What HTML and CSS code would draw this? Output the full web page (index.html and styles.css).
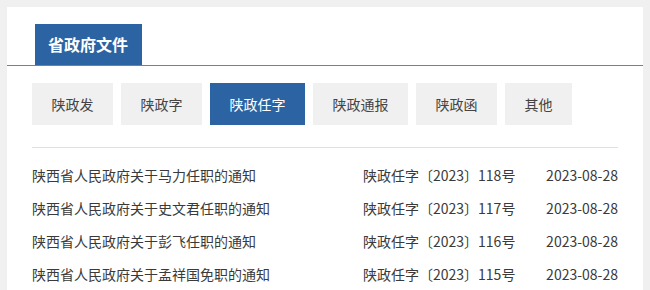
FILE: index.html
```html
<!DOCTYPE html>
<html lang="zh-CN">
<head>
    <meta charset="UTF-8">
    <title>省政府文件</title>
    <link rel="stylesheet" href="styles.css">
</head>
<body>
    <div class="card">
        <div class="card-head">
            <span class="card-title">省政府文件</span>
        </div>

        <div class="tabs">
            <span class="tab">陕政发</span>
            <span class="tab">陕政字</span>
            <span class="tab active">陕政任字</span>
            <span class="tab">陕政通报</span>
            <span class="tab">陕政函</span>
            <span class="tab">其他</span>
        </div>

        <ul class="doc-list">
            <li class="doc"><span class="doc-title">陕西省人民政府关于马力任职的通知</span><span class="doc-no">陕政任字〔2023〕118号</span><span class="doc-date">2023-08-28</span></li>
            <li class="doc"><span class="doc-title">陕西省人民政府关于史文君任职的通知</span><span class="doc-no">陕政任字〔2023〕117号</span><span class="doc-date">2023-08-28</span></li>
            <li class="doc"><span class="doc-title">陕西省人民政府关于彭飞任职的通知</span><span class="doc-no">陕政任字〔2023〕116号</span><span class="doc-date">2023-08-28</span></li>
            <li class="doc"><span class="doc-title">陕西省人民政府关于孟祥国免职的通知</span><span class="doc-no">陕政任字〔2023〕115号</span><span class="doc-date">2023-08-28</span></li>
        </ul>
    </div>
</body>
</html>
```

FILE: styles.css
```css
body {
    margin: 0;
    padding: 7px 7px 0 7px;
    background-color: #f0f0f0;
    font-family: "Noto Sans CJK SC", "Noto Sans", sans-serif;
    color: #333;
}
.card {
    background-color: #fff;
    height: 283px;
    overflow: hidden;
}
.card-head {
    padding: 17px 0 0 28px;
    border-bottom: 1px solid #5d84ba;
    display: flex;
}
.card-title {
    display: block;
    height: 41px;
    line-height: 41px;
    padding: 0 14px 0 13px;
    background-color: #2c64a3;
    color: #fff;
    font-size: 16px;
    font-weight: bold;
}
.tabs {
    display: flex;
    gap: 8px;
    margin: 17px 0 0 25px;
}
.tab {
    display: block;
    height: 42px;
    line-height: 42px;
    padding: 0 19.5px;
    background-color: #f0f0f0;
    font-size: 14px;
    color: #444;
}
.tab.active {
    background-color: #2c64a3;
    color: #fff;
}
.doc-list {
    list-style: none;
    margin: 22px 25px 0 25px;
    padding: 11px 0 0 0;
    border-top: 1px solid #e0e0e0;
}
.doc {
    display: grid;
    grid-template-columns: 1fr 182px 73px;
    height: 33px;
    line-height: 33px;
    font-size: 14px;
    color: #3a3a3a;
}
.doc-date {
    text-align: right;
    white-space: nowrap;
}
```
